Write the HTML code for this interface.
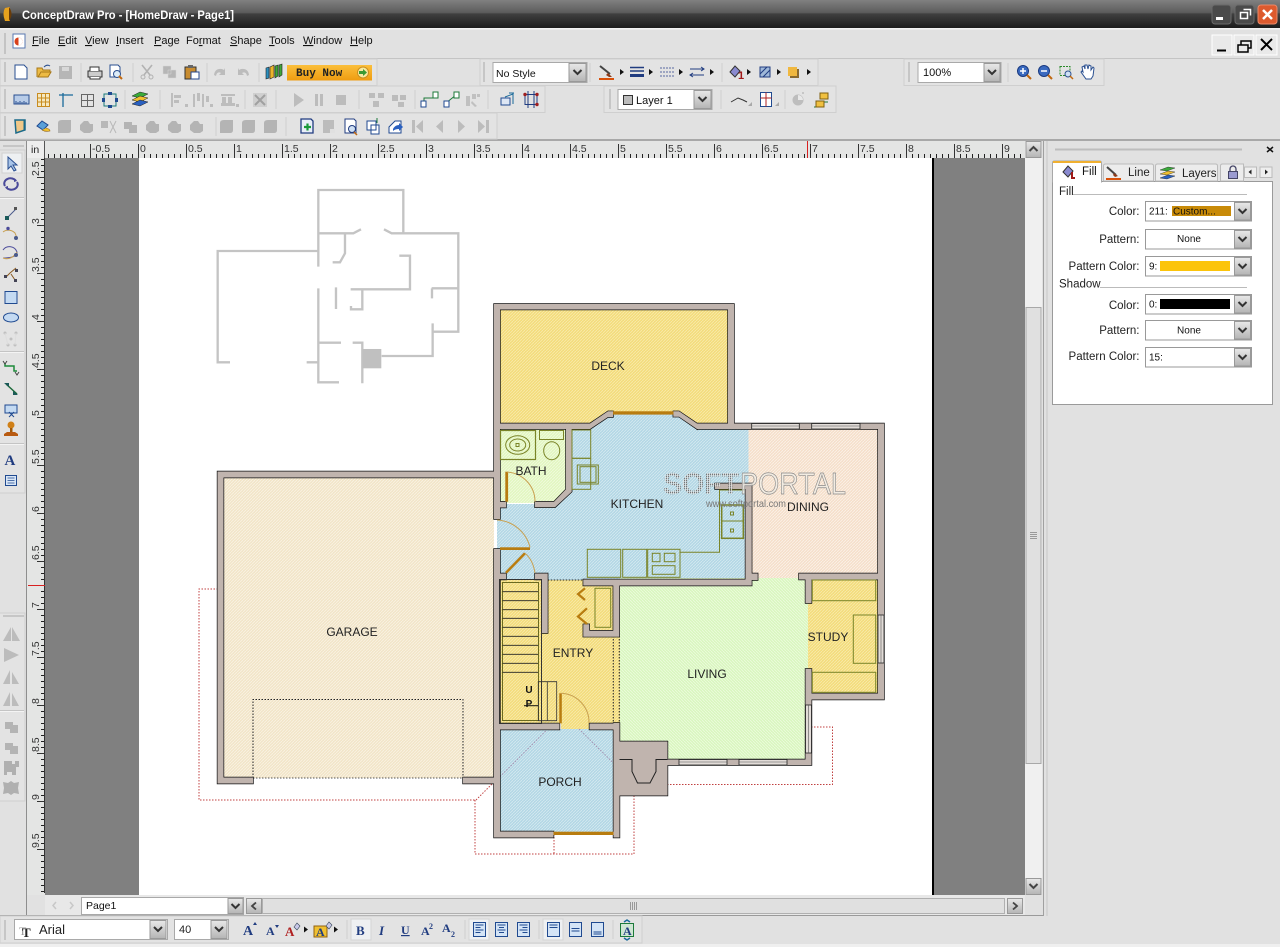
<!DOCTYPE html>
<html lang="en"><head><meta charset="utf-8"><title>ConceptDraw Pro - [HomeDraw - Page1]</title>
<style>
html,body{margin:0;padding:0;background:#e1e1e1;overflow:hidden}
svg{display:block;font-family:"Liberation Sans",Arial,sans-serif}
.m{font-size:11px;fill:#111}
.t{font-size:10.5px;fill:#222}
.r{font-size:11.5px;fill:#222;text-anchor:end}
.c{font-size:10px;fill:#111}
.room{font-size:12px;fill:#222;text-anchor:middle}
.rl{font-size:10.5px;fill:#333}
</style></head><body>
<svg width="1280" height="947" viewBox="0 0 1280 947" xmlns="http://www.w3.org/2000/svg">
<defs>
<linearGradient id="tb" x1="0" y1="0" x2="0" y2="1"><stop offset="0" stop-color="#808080"/><stop offset=".45" stop-color="#5c5c5c"/><stop offset=".5" stop-color="#3f3f3f"/><stop offset="1" stop-color="#1c1c1c"/></linearGradient>
<linearGradient id="btn" x1="0" y1="0" x2="0" y2="1"><stop offset="0" stop-color="#e8e8e8"/><stop offset="1" stop-color="#b4b4b4"/></linearGradient>
<linearGradient id="buy" x1="0" y1="0" x2="0" y2="1"><stop offset="0" stop-color="#fbbf3c"/><stop offset="1" stop-color="#ef9c10"/></linearGradient>
<pattern id="pDeck" width="3" height="3" patternUnits="userSpaceOnUse"><rect width="3" height="3" fill="#f3dc7c"/><path d="M0 3L3 0" stroke="#f8eaa8" stroke-width=".9"/></pattern>
<pattern id="pBlue" width="3" height="3" patternUnits="userSpaceOnUse"><rect width="3" height="3" fill="#b3d7e5"/><path d="M0 3L3 0" stroke="#d3e8ef" stroke-width=".9"/></pattern>
<pattern id="pDin" width="3" height="3" patternUnits="userSpaceOnUse"><rect width="3" height="3" fill="#f5dfca"/><path d="M0 3L3 0" stroke="#fbf1e6" stroke-width=".9"/></pattern>
<pattern id="pBath" width="3" height="3" patternUnits="userSpaceOnUse"><rect width="3" height="3" fill="#e2f6c0"/><path d="M0 3L3 0" stroke="#f0fbdc" stroke-width=".9"/></pattern>
<pattern id="pLiv" width="3" height="3" patternUnits="userSpaceOnUse"><rect width="3" height="3" fill="#d9f6bf"/><path d="M0 0L3 3" stroke="#ecfbdc" stroke-width=".9"/></pattern>
<pattern id="pGar" width="3" height="3" patternUnits="userSpaceOnUse"><rect width="3" height="3" fill="#f2e5c8"/><path d="M0 3L3 0" stroke="#f9f2e2" stroke-width=".9"/></pattern>
<pattern id="tx" width="6" height="4" patternUnits="userSpaceOnUse" x="138" y="154"><rect x="0" y="0" width="1" height="4" fill="#222"/></pattern>
<pattern id="ty" width="4" height="6" patternUnits="userSpaceOnUse" x="41" y="177"><rect x="0" y="0" width="4" height="1" fill="#222"/></pattern>
<pattern id="Tx" width="48" height="14" patternUnits="userSpaceOnUse" x="138" y="144"><rect x="0" y="0" width="1" height="14" fill="#333"/></pattern>
<pattern id="Ty" width="10" height="48" patternUnits="userSpaceOnUse" x="37" y="177"><rect x="0" y="0" width="10" height="1" fill="#333"/></pattern>
<pattern id="dots" width="2" height="2" patternUnits="userSpaceOnUse"><rect width="1.3" height="1.3" fill="#777"/><rect x="1.3" width=".7" height="2" fill="#eee"/></pattern>

<path id="W" d="M494 304H500V519H494ZM494 304H734V309.5H494ZM728 304H734V429H728ZM697 423.5H884V429H697ZM500 423.5H590L608 411.3H613V417H608L590 429H500ZM673.3 411.3H679L697 423.5V429L679 416.7H673.3ZM878 423.5H884V699.5H878ZM805.5 693.5H884V699.5H805.5ZM799 573.5H878V579.5H799ZM805.5 573.5H811.5V603H805.5ZM805.5 669H811.5V765H805.5ZM667 759.5H811.5V765H667ZM619.5 741.5H667.5V795.5H619.5ZM613.5 723H619.5V837.5H613.5ZM494 831.5H553.5V837.5H494ZM494 723.5H559.5V729.5H494ZM589.5 723.5H619.5V729.5H589.5ZM494 549H500V837.5H494ZM500 573.5H506V579.5H500ZM500 501.7H506V507.5H500ZM535 573.5H547.7V579.5H535ZM541.7 573.5H547.7V633H541.7ZM583.3 579.5H751.7V585.5H583.3ZM751 573.5H757.7V580H751ZM745.5 483.5H751.7V585.5H745.5ZM715 483.5H751.7V489H715ZM613.3 585H619.3V636.7H613.3ZM583.3 630.7H619.3V636.7H583.3ZM583.3 624.3H589.3V636.7H583.3ZM566 429H571.7V491.7L555 507.3H535V501.7H554L566 489.3ZM217.5 471.5H494V477.5H217.5ZM217.5 471.5H223.5V783.5H217.5ZM217.5 777.5H253V783.5H217.5ZM463 777.5H494V783.5H463Z"/>

<g id="gdoc"><path d="M-6-7H3L6-4V7H-6Z" fill="#fff" stroke="#2a4f90"/></g>
<g id="gsq"><path d="M-6-6H6V6H-6Z" fill="#b8b8b8"/></g>
<g id="gb1"><path d="M-7-4Q-7-7-3-7H6V3Q6 6 3 6H-7Z" fill="#b4b4b4"/></g>
<g id="gb2"><path d="M-7-2L-3-6H1L3-3H6V4L3 6H-3L-7 3Z" fill="#b4b4b4"/></g>
<g id="gb3"><path d="M-7-5H1V-2H6V6H-2V2H-7Z" fill="#b4b4b4"/></g>
<g id="gtr"><path d="M0-7L7 7H-7Z" fill="#b4b4b4"/><path d="M0-7V7" stroke="#e8e8e8"/></g>
<g id="garr"><path d="M-2-3L2 0L-2 3Z" fill="#111"/></g>
<g id="gchev"><path d="M-4-2L0 2L4-2" fill="none" stroke="#333" stroke-width="2"/></g>
</defs>

<!-- base -->
<rect width="1280" height="947" fill="#e1e1e1"/>

<!-- title bar -->
<rect width="1280" height="28" fill="url(#tb)"/>
<rect y="28" width="1280" height="1.5" fill="#f2f2f2"/>
<path d="M5 8Q2 13 5 21L10 21V7Z" fill="#e7a21e"/><path d="M9 7Q14 14 9 21Z" fill="#6a3c08"/>
<text x="22" y="19" font-size="11.5" font-weight="bold" fill="#fff" textLength="212" lengthAdjust="spacingAndGlyphs">ConceptDraw Pro - [HomeDraw - Page1]</text>
<rect x="1212" y="5" width="19" height="19" rx="3" fill="#4a4a4a" stroke="#6a6a6a"/><rect x="1216" y="17" width="7" height="3" fill="#fff"/>
<rect x="1235" y="5" width="19" height="19" rx="3" fill="#4a4a4a" stroke="#6a6a6a"/><path d="M1240.500 12.500h7v6h-7zM1243.500 9.500h7v6" fill="none" stroke="#fff" stroke-width="1.500"/>
<rect x="1258" y="5" width="19" height="19" rx="3" fill="#dd5a2e" stroke="#e98a6a"/><path d="M1263 10l9 9M1272 10l-9 9" stroke="#fff" stroke-width="2.500"/>

<!-- menu bar -->
<path d="M5 33V54" stroke="#c4c4c4" stroke-width="2"/>
<rect x="13" y="34" width="12" height="14" fill="#fff" stroke="#5a78b0"/><circle cx="18.500" cy="41.500" r="4" fill="#d8401a"/><path d="M18.500 37.500a4 4 0 0 1 0 8Z" fill="#fff"/>
<text class="m" x="32" y="44"><tspan text-decoration="underline">F</tspan>ile</text>
<text class="m" x="58" y="44"><tspan text-decoration="underline">E</tspan>dit</text>
<text class="m" x="85" y="44"><tspan text-decoration="underline">V</tspan>iew</text>
<text class="m" x="116" y="44"><tspan text-decoration="underline">I</tspan>nsert</text>
<text class="m" x="154" y="44"><tspan text-decoration="underline">P</tspan>age</text>
<text class="m" x="186" y="44">Fo<tspan text-decoration="underline">r</tspan>mat</text>
<text class="m" x="230" y="44"><tspan text-decoration="underline">S</tspan>hape</text>
<text class="m" x="269" y="44"><tspan text-decoration="underline">T</tspan>ools</text>
<text class="m" x="303" y="44"><tspan text-decoration="underline">W</tspan>indow</text>
<text class="m" x="350" y="44"><tspan text-decoration="underline">H</tspan>elp</text>
<g fill="#e9e9e9" stroke="#fff"><rect x="1212" y="35" width="20" height="20"/><rect x="1234" y="35" width="20" height="20"/><rect x="1256" y="35" width="21" height="20"/></g>
<path d="M1217 50.500h9" stroke="#000" stroke-width="2"/><path d="M1238 45h10v7h-10zM1241 45v-4h10v7h-3" fill="none" stroke="#000" stroke-width="1.500"/><path d="M1261 39l11 11M1272 39l-11 11" stroke="#000" stroke-width="2"/>

<!-- toolbar lines & bands -->
<rect y="58" width="1280" height="1" fill="#c4c4c4"/>
<rect y="139" width="1280" height="2" fill="#a8a8a8"/>
<g fill="#e3e3e3" stroke="#cfcfcf">
<rect x="0" y="59" width="377" height="26.500"/><rect x="480" y="59" width="338" height="26.500"/><rect x="904" y="59" width="200" height="26.500"/>
<rect x="0" y="86" width="545" height="26.500"/><rect x="604" y="86" width="232" height="26.500"/>
<rect x="0" y="113" width="497" height="26"/>
</g>
<g stroke="#c6c6c6" stroke-width="2"><path d="M5 62V82M5 89V109M5 116V136M484 62V82M610 89V109M909 62V82"/></g>
<g stroke="#cfcfcf"><path d="M81 63V82M133 63V82M207 63V82M259 63V82M590 63V82M722 63V82M1008 63V82M125 90V109M160 90V109M245 90V109M276 90V109M359 90V109M415 90V109M488 90V109M721 90V109M785 90V109M216 117V136M286 117V136"/></g>

<!-- row 1 icons -->
<use href="#gdoc" x="21" y="72"/>
<path d="M37 77V68h5l1 2h7v2h-9l-3 5H48l3-5h-9" fill="#edbb45" stroke="#a87818"/><path d="M44 67q3-3 6-1" fill="none" stroke="#2a4f90"/>
<rect x="59" y="66" width="13" height="13" fill="#b6b6b6"/><rect x="62" y="67" width="7" height="4" fill="#d8d8d8"/>
<rect x="88" y="71" width="14" height="6" fill="#ccc" stroke="#333"/><path d="M90 71v-4h9v4M90 77v2h10v-2" fill="#fff" stroke="#333"/>
<path d="M110 65h8l2 2v10h-10Z" fill="#fff" stroke="#2a4f90"/><circle cx="117" cy="74" r="3.500" fill="#dcecf8" stroke="#2a4f90"/><path d="M119 76l3 3" stroke="#c06810" stroke-width="2"/>
<path d="M142 65l8 10M152 65l-8 10" stroke="#b2b2b2" stroke-width="1.600"/><circle cx="143" cy="77" r="2" fill="none" stroke="#b2b2b2"/><circle cx="151" cy="77" r="2" fill="none" stroke="#b2b2b2"/>
<path d="M163 66h8v8h-8ZM168 70h8v8h-8Z" fill="#b6b6b6" stroke="#d8d8d8" stroke-width=".5"/>
<rect x="185" y="67" width="11" height="12" fill="#c88c30" stroke="#333"/><rect x="188" y="65" width="5" height="3" fill="#666"/><rect x="191" y="72" width="8" height="7" fill="#fff" stroke="#23458c"/>
<path d="M214 75q1-7 8-6l2 1 1-2v7h-6l2-2q-4-2-5 3Z" fill="#bcbcbc"/><path d="M249 75q-1-7-8-6l-2 1-1-2v7h6l-2-2q4-2 5 3Z" fill="#bcbcbc"/>
<g stroke="#222" stroke-width=".6"><path d="M266 68l3-1v11l-3 1Z" fill="#2a90c0"/><path d="M270 67l4-2v12l-4 2Z" fill="#ecb42a"/><path d="M275 66l3-1v11l-3 2Z" fill="#3fa53a"/><path d="M279 65l3-1v11l-3 2Z" fill="#3fa53a"/></g>
<rect x="287" y="65" width="85" height="15.500" fill="url(#buy)"/>
<text x="296" y="76" font-family="'Liberation Mono',monospace" font-weight="bold" font-size="11" fill="#222">Buy Now</text>
<circle cx="363" cy="72.500" r="5.500" fill="#f8e9a0" stroke="#c89020"/><path d="M359 71h4v-2l4 3.500-4 3.500v-2h-4Z" fill="#3a9a32"/>

<!-- row 1 mid -->
<rect x="493" y="62.500" width="94" height="20" fill="#fff" stroke="#a9a9a9"/>
<rect x="569" y="63.500" width="17" height="18" fill="url(#btn)" stroke="#999"/><use href="#gchev" x="577.500" y="72"/>
<text x="496" y="77" font-size="10.500" fill="#111">No Style</text>
<path d="M600 66l10 8" stroke="#444" stroke-width="2"/><path d="M608 73l4 4-3 0-3-2Z" fill="#8a3a1a"/><rect x="599" y="78" width="15" height="2" fill="#d8500a"/>
<use href="#garr" x="622" y="72"/>
<path d="M630 67.500h14M630 71h14" stroke="#203c80" stroke-width="1.500"/><rect x="630" y="74" width="14" height="3" fill="#203c80"/>
<use href="#garr" x="651" y="72"/>
<path d="M660 68h14M660 72h14M660 76h14" stroke="#5a6aa0" stroke-dasharray="2 1"/>
<use href="#garr" x="681" y="72"/>
<path d="M690 69h14M690 75h14" stroke="#203c80"/><path d="M701 67l3 2-3 2M693 73l-3 2 3 2" fill="none" stroke="#203c80"/>
<use href="#garr" x="712" y="72"/>
<path d="M730 72l5-6 5 5-5 6Z" fill="#8a8ad0" stroke="#333"/><text x="738" y="79" font-size="11" font-weight="bold" fill="#a01818">1</text>
<use href="#garr" x="749" y="72"/>
<rect x="760" y="67" width="10" height="10" fill="#9fb8d8" stroke="#203c80"/><path d="M760 74l7-7M763 77l7-7" stroke="#203c80"/>
<use href="#garr" x="779" y="72"/>
<rect x="790" y="69" width="9" height="9" fill="#8a6a30"/><rect x="788" y="67" width="9" height="9" fill="#f0b840"/>
<use href="#garr" x="809" y="72"/>

<!-- zoom -->
<rect x="918" y="62.500" width="83" height="20" fill="#fff" stroke="#a9a9a9"/>
<rect x="984" y="63.500" width="16" height="18" fill="url(#btn)" stroke="#999"/><use href="#gchev" x="992" y="72"/>
<text x="923" y="76" font-size="11" fill="#111">100%</text>
<circle cx="1023" cy="71" r="5.500" fill="#3a6ac0" stroke="#1a3a80"/><path d="M1020 71h6M1023 68v6" stroke="#fff" stroke-width="1.500"/><path d="M1027 75l4 4" stroke="#c06810" stroke-width="2"/>
<circle cx="1044" cy="71" r="5.500" fill="#3a6ac0" stroke="#1a3a80"/><path d="M1041 71h6" stroke="#fff" stroke-width="1.500"/><path d="M1048 75l4 4" stroke="#c06810" stroke-width="2"/>
<rect x="1060" y="66.500" width="10" height="9" fill="none" stroke="#2a8a2a" stroke-dasharray="2 1"/><circle cx="1068" cy="74" r="3" fill="#cfe0f4" stroke="#2a4f90"/><path d="M1070 76l3 3" stroke="#c06810" stroke-width="1.500"/>
<path d="M1083 72l-1-5 2-1 1 3 0-4 2 0 1 4 1-4 2 1 0 4 2-3 1 1-1 8-2 3h-5l-5-7 1-1Z" fill="#fff" stroke="#2a4f90"/>

<!-- row 2 icons -->
<rect x="14" y="95" width="15" height="9" fill="#b8cce8" stroke="#2a4f90"/><path d="M16 104v-3M18 104v-2M20 104v-3M22 104v-2M24 104v-3M26 104v-2" stroke="#2a4f90"/>
<path d="M37.500 93.500h12v13h-12ZM37.500 98h12M37.500 102h12M41.500 93.500v13M45.500 93.500v13" fill="#f5e8c0" stroke="#c88c20"/>
<path d="M59 95h14M63 93v14" stroke="#1a6a9a" stroke-width="1.300"/>
<path d="M81.500 94.500h12v12h-12ZM87.500 94.500v12M81.500 100.500h12" fill="none" stroke="#666"/>
<rect x="104" y="94" width="12" height="12" fill="none" stroke="#1a7a7a"/><g fill="#204a90"><rect x="108" y="92" width="4" height="3"/><rect x="108" y="105" width="4" height="3"/><rect x="102" y="98" width="3" height="4"/><rect x="115" y="98" width="3" height="4"/></g>
<path d="M132 96l8-4 8 2-8 4Z" fill="#3aaa3a" stroke="#222" stroke-width=".5"/><path d="M132 100l8-4 8 2-8 4Z" fill="#f0c030" stroke="#222" stroke-width=".5"/><path d="M132 104l8-4 8 2-8 4Z" fill="#2a60c0" stroke="#222" stroke-width=".5"/>
<g fill="#bdbdbd"><path d="M171 93h2v14h-2ZM174 95h7v3h-7ZM174 100h5v3h-5ZM185 104l3 0v3h-3Z"/><path d="M193 94h2v13h-2ZM197 93h3v8h-3ZM202 94h2v13h-2ZM206 96h3v6h-3ZM210 104h3v3h-3Z"/><path d="M221 94h14v2h-14ZM222 97h4v6h-4ZM228 97h4v6h-4ZM221 103h14v3h-14ZM236 104h3v3h-3Z"/><path d="M253 93h14v14h-14Z" fill="#cfcfcf"/></g>
<path d="M255 95l10 10M265 95l-10 10" stroke="#a0a0a0" stroke-width="2"/>
<path d="M294 93l10 7-10 7Z" fill="#bcbcbc"/><path d="M315 94h3v12h-3ZM320 94h3v12h-3Z" fill="#bcbcbc"/><rect x="336" y="95" width="10" height="10" fill="#bcbcbc"/>
<g fill="#bcbcbc"><path d="M369 93h6v5h-6ZM378 93h6v5h-6ZM373 101h6v6h-6Z"/><path d="M392 95h6v6h-6ZM400 95h6v5h-6ZM398 102h6v5h-6Z"/></g>
<path d="M424 104v-6h9v-4h4" fill="none" stroke="#1c7a3a"/><rect x="421" y="101" width="5" height="6" fill="#fff" stroke="#204a90"/><rect x="433" y="92" width="5" height="6" fill="#fff" stroke="#1c7a3a"/>
<path d="M446 103l10-8" stroke="#1c7a3a"/><rect x="444" y="101" width="5" height="6" fill="#fff" stroke="#204a90"/><rect x="454" y="92" width="5" height="6" fill="#fff" stroke="#1c7a3a"/>
<g fill="#c0c0c0"><path d="M466 96h4v10h-4ZM472 94h4v5h-4ZM477 94h3v3h-3ZM472 101l5 5-2 1-4-4Z"/></g>
<rect x="501" y="98" width="9" height="7" fill="#dde6f4" stroke="#204a90"/><path d="M505 97l8-3v10M509 93h5" fill="none" stroke="#1a6a9a"/>
<path d="M525 94.500h12v10h-12ZM528 91v17M534 91v17" fill="none" stroke="#203c80"/><g fill="#a02020"><circle cx="525" cy="94.500" r="1.700"/><circle cx="537" cy="94.500" r="1.700"/><circle cx="537" cy="104.500" r="1.700"/></g>
<rect x="618" y="89.500" width="94" height="20" fill="#fff" stroke="#a9a9a9"/>
<rect x="694" y="90.500" width="17" height="18" fill="url(#btn)" stroke="#999"/><use href="#gchev" x="702.500" y="99"/>
<rect x="623.500" y="95.500" width="9" height="9" fill="#bcbcbc" stroke="#333"/>
<text x="636" y="104" font-size="11" fill="#111">Layer 1</text>
<path d="M731 102l7-4 5 2 4 2" fill="none" stroke="#333"/><path d="M748 106h4v-4Z" fill="#aaa"/>
<rect x="760.500" y="92.500" width="11" height="14" fill="#fff" stroke="#204a90"/><path d="M760.500 98h11M766 92.500v14" stroke="#b02020"/><path d="M775 106h4v-4Z" fill="#aaa"/>
<circle cx="798" cy="100" r="5.500" fill="#bdbdbd"/><path d="M798 95a5 5 0 0 1 5 5h-5Z" fill="#e8e8e8"/><path d="M803 94v-2" stroke="#aaa"/>
<path d="M814 107h7v-5h7" fill="none" stroke="#1c7a3a"/><rect x="820" y="93" width="8" height="6" fill="#f0c040" stroke="#806010"/><rect x="816" y="101" width="8" height="6" fill="#f0c040" stroke="#806010"/>

<!-- row 3 icons -->
<path d="M15 120h10v10l-9 3Z" fill="#f0c888" stroke="#1a6a8a" stroke-width="1.500"/><path d="M24 120v11" stroke="#1a6a8a"/>
<path d="M37 126l5-5 6 4-5 5Z" fill="#5aa0d8" stroke="#204a90"/><path d="M46 128q4 1 4 3-5 1-8-1" fill="#f0c030" stroke="#906010" stroke-width=".6"/>
<use href="#gb1" x="65" y="127"/><use href="#gb2" x="87" y="127"/>
<path d="M101 121h7v7h-7Z" fill="#b8b8b8"/><path d="M110 121l6 12M116 121l-6 12" stroke="#b8b8b8"/>
<use href="#gb3" x="131" y="127"/><use href="#gb2" x="153" y="127"/><use href="#gb2" x="175" y="127"/><use href="#gb2" x="197" y="127"/>
<use href="#gb1" x="227" y="127"/><use href="#gb1" x="249" y="127"/><use href="#gb1" x="271" y="127"/>
<path d="M301 119h10l2 2v12h-12Z" fill="#e8eef8" stroke="#203c80" stroke-width="1.300"/><path d="M304 127h7M307.500 123.500v7" stroke="#1a9a3a" stroke-width="2.200"/>
<rect x="323" y="120" width="11" height="13" fill="#bcbcbc"/><rect x="330" y="129" width="5" height="4" fill="#e0e0e0"/>
<path d="M345 119h9l2 2v12h-11Z" fill="#fff" stroke="#203c80"/><circle cx="352" cy="129" r="3.500" fill="#cfe0f4" stroke="#203c80"/><path d="M354 132l3 3" stroke="#c06810" stroke-width="1.500"/>
<path d="M367 121h9v9h-9ZM371 125h8v9h-8Z" fill="#fff" stroke="#204a90"/><path d="M377 118v5" stroke="#1c7a3a"/>
<path d="M389 127l6-6h6v12h-12Z" fill="#fff" stroke="#204a90"/><path d="M393 129q2-4 6-4v-2l4 4-4 4v-2q-4 0-6 2Z" fill="#2a60c0"/>
<path d="M412 120h3v13h-3ZM423 120v13l-7-6.500Z" fill="#bcbcbc"/><path d="M443 120v13l-7-6.500Z" fill="#bcbcbc"/><path d="M458 120v13l7-6.500Z" fill="#bcbcbc"/><path d="M478 120v13l7-6.500ZM486 120h3v13h-3Z" fill="#bcbcbc"/>

<!-- left toolbar -->
<rect x="0" y="141" width="26" height="806" fill="#e1e1e1"/>
<rect x="26" y="141" width="1" height="775" fill="#8e8e8e"/>
<g fill="#e3e3e3" stroke="#cfcfcf"><rect x="-1" y="150" width="26" height="343"/><rect x="-1" y="613" width="26" height="188"/></g>
<path d="M3 146H24M3 616H24" stroke="#c6c6c6" stroke-width="2"/>
<path d="M0 198.500H24M0 352.500H24M0 444.500H24M0 711.500H24" stroke="#f4f4f4"/><path d="M0 197.500H24M0 351.500H24M0 443.500H24M0 710.500H24" stroke="#c4c4c4"/>
<rect x="2" y="153" width="20" height="20" fill="#eef0f2" stroke="#d0d0d0"/>
<path d="M8 157v12l3-3 3 5 2-1-3-5h4Z" fill="#a8c4e8" stroke="#2a4f90"/>
<path d="M5 186a6 5 0 0 1 11-5M17 182a6 5 0 0 1-11 5" fill="none" stroke="#4a4a9a" stroke-width="2"/><path d="M14 178l3 3-3 1ZM8 190l-3-3 3-1Z" fill="#4a4a9a"/>
<path d="M7 218l9-9" stroke="#4a5a8a"/><rect x="5" y="216" width="4" height="4" fill="#1a5a5a"/><rect x="14" y="207" width="3" height="3" fill="#555"/>
<path d="M3 232a9 9 0 0 1 12 1l2 5" fill="none" stroke="#c8a050"/><circle cx="8" cy="228.500" r="1.700" fill="#4a4a9a"/><circle cx="16" cy="238" r="2" fill="#4a5a8a"/>
<path d="M3 250a8 8 0 0 1 14 2q0 6-14 6" fill="none" stroke="#4a4a9a"/><path d="M3 258q8 3 14-6" fill="none" stroke="#c8a050"/><circle cx="16" cy="255" r="2" fill="#4a5a8a"/>
<path d="M6 277l4-4 6-5M11 274l4 6" fill="none" stroke="#8a5a20"/><g fill="#445"><rect x="4" y="275" width="3" height="3"/><rect x="15" y="269" width="3" height="3"/><rect x="14" y="279" width="3" height="3"/></g>
<rect x="5" y="291.500" width="12" height="12" fill="#c4daf2" stroke="#204a90"/>
<ellipse cx="11" cy="317.500" rx="7.500" ry="4.500" fill="#c4daf2" stroke="#204a90"/>
<g fill="#c0c0c0"><circle cx="5" cy="333" r="1.500"/><circle cx="16" cy="333" r="1.500"/><circle cx="11" cy="339" r="1.500"/><circle cx="8" cy="345" r="1.500"/><circle cx="15" cy="345" r="1.500"/></g><path d="M5 333l3 12M16 333l-1 12" stroke="#ddd"/>
<path d="M5 363v3h9v5h3" fill="none" stroke="#1c8a3a" stroke-width="1.500"/><path d="M3 361l2 3 2-3M15 372l2 3 2-3" fill="none" stroke="#444"/>
<path d="M6 384l11 10" stroke="#1c6a3a" stroke-width="1.500"/><path d="M4 383h5v4ZM18 395h-5v-4Z" fill="#1c5a5a"/>
<rect x="5" y="405" width="12" height="8" fill="#c4daf2" stroke="#204a90"/><path d="M9 412l5 5M14 412l-5 5" stroke="#204a90"/>
<circle cx="11" cy="425" r="3.500" fill="#d08018"/><rect x="10" y="428" width="2.500" height="4" fill="#a05808"/><path d="M4 434l3-2h8l3 2v2H4Z" fill="#b85a10"/>
<text x="4.500" y="465" font-family="'Liberation Serif',serif" font-weight="bold" font-size="15" fill="#203c80">A</text>
<rect x="5.500" y="475.500" width="11" height="10" fill="#d8e6f6" stroke="#204a90"/><path d="M7.500 478h7M7.500 480.500h7M7.500 483h7" stroke="#204a90" stroke-width=".8"/>
<path d="M11 627v14H3ZM12 627v14h8Z" fill="#bcbcbc"/><path d="M4 648l15 7-15 7Z" fill="#bcbcbc"/>
<path d="M10 670v14H3ZM12 672l7 12h-7Z" fill="#bcbcbc"/><path d="M10 692v14H3ZM12 693l7 13h-7Z" fill="#bcbcbc"/>
<use href="#gb3" x="12" y="727"/><use href="#gb3" x="12" y="748"/>
<path d="M4 761h8v3h3v-3h4v6h-3v8h-4v-3H7v3H4Z" fill="#b0b0b0"/><path d="M3 782l5 1 3-2 3 2 5-1-1 6 1 6-5-1-3 2-3-2-5 1 1-6Z" fill="#b0b0b0"/>

<!-- rulers -->
<rect x="27" y="141" width="18" height="17" fill="#eee"/>
<text x="31" y="153" font-size="10.500" fill="#222">in</text>
<rect x="45" y="141" width="980" height="17" fill="#e4e5e4"/>
<rect x="27" y="158" width="18" height="737" fill="#e4e5e4"/>
<path d="M44.500 141V158" stroke="#555"/>
<rect x="45" y="154" width="979" height="4" fill="url(#tx)"/>
<rect x="45" y="144" width="979" height="14" fill="url(#Tx)"/>
<rect x="41" y="158" width="4" height="735" fill="url(#ty)"/>
<rect x="37" y="158" width="8" height="735" fill="url(#Ty)"/>
<rect x="44" y="158" width="1" height="735" fill="#333"/>
<g class="rl">
<text class="rl" x="92" y="152">-0.5</text><text class="rl" x="140" y="152">0</text><text class="rl" x="188" y="152">0.5</text><text class="rl" x="236" y="152">1</text><text class="rl" x="284" y="152">1.5</text><text class="rl" x="332" y="152">2</text><text class="rl" x="380" y="152">2.5</text><text class="rl" x="428" y="152">3</text><text class="rl" x="476" y="152">3.5</text><text class="rl" x="524" y="152">4</text><text class="rl" x="572" y="152">4.5</text><text class="rl" x="620" y="152">5</text><text class="rl" x="668" y="152">5.5</text><text class="rl" x="716" y="152">6</text><text class="rl" x="764" y="152">6.5</text><text class="rl" x="812" y="152">7</text><text class="rl" x="860" y="152">7.5</text><text class="rl" x="908" y="152">8</text><text class="rl" x="956" y="152">8.5</text><text class="rl" x="1004" y="152">9</text>
</g>
<g>
<text class="rl" transform="translate(39,176) rotate(-90)">2.5</text><text class="rl" transform="translate(39,224) rotate(-90)">3</text><text class="rl" transform="translate(39,272) rotate(-90)">3.5</text><text class="rl" transform="translate(39,320) rotate(-90)">4</text><text class="rl" transform="translate(39,368) rotate(-90)">4.5</text><text class="rl" transform="translate(39,416) rotate(-90)">5</text><text class="rl" transform="translate(39,464) rotate(-90)">5.5</text><text class="rl" transform="translate(39,512) rotate(-90)">6</text><text class="rl" transform="translate(39,560) rotate(-90)">6.5</text><text class="rl" transform="translate(39,608) rotate(-90)">7</text><text class="rl" transform="translate(39,656) rotate(-90)">7.5</text><text class="rl" transform="translate(39,704) rotate(-90)">8</text><text class="rl" transform="translate(39,752) rotate(-90)">8.5</text><text class="rl" transform="translate(39,800) rotate(-90)">9</text><text class="rl" transform="translate(39,848) rotate(-90)">9.5</text>
</g>
<rect x="807" y="141" width="1" height="17" fill="#d82020"/>
<rect x="28" y="585" width="17" height="1" fill="#d82020"/>

<!-- canvas -->
<rect x="45" y="158" width="980" height="737" fill="#808080"/>
<rect x="139" y="158" width="793" height="737" fill="#fff"/>
<rect x="932" y="158" width="2" height="737" fill="#000"/>

<!-- ghost plan -->
<g transform="translate(190,170) scale(.3333)" fill="none" stroke="#c4c4c4" stroke-width="7">
<path d="M385 190V60H640V190M385 190H490L513 178M582 178L605 190H805V485H730M385 243H83V577H120M385 190V290M465 190V250L450 277H428M385 355V637H447M438 352V417M628 257H660V358H482M517 360V418H483V408M725 355H805M726 355V385M728 460V558H575M350 577H385M385 518H453M488 518H517V640"/>
<rect x="517" y="537" width="57" height="58" fill="#c0c0c0" stroke="none"/>
</g>

<!-- plan: red dotted -->
<g fill="none" stroke="#c04040" stroke-width="1" stroke-dasharray="1.500 1.500">
<path d="M488 589H199V800H476L493 783M475 800V854H634V795M554 729V854M619 727H832.500V784.500H668"/>
</g>

<!-- rooms -->
<path d="M223 477H494V778H223Z" fill="url(#pGar)"/>
<path d="M499 309H728V424H697L680 412H608L590 424H499Z" fill="url(#pDeck)"/>
<path d="M497 504H535L571 490V429H590L608 413H680L697 429H748.500V580H497Z" fill="url(#pBlue)"/>
<path d="M748.500 429H878V574H805V578H748.500Z" fill="url(#pDin)"/>
<path d="M500 429H566V490L554 503H500Z" fill="url(#pBath)"/>
<path d="M500 580H620V729H561V723H500Z" fill="url(#pDeck)"/>
<path d="M620 578H808V700H805V760H667V742H620Z" fill="url(#pLiv)"/>
<path d="M808 580H878V693H808Z" fill="url(#pDeck)"/>
<path d="M499 729H614V832H499Z" fill="url(#pBlue)"/>

<!-- garage door dashed -->
<path d="M253 778V699.500H463V778" fill="none" stroke="#222" stroke-dasharray="1.500 1.500"/>
<path d="M253 778H463" stroke="#555" stroke-dasharray="1.500 1.500"/>
<path d="M500 776.700L546.700 730M579 729L613 762.700" stroke="#a090b0" stroke-dasharray="1.500 1.500"/>
<path d="M547.700 580H583M613.300 636V723M619.300 636V723" stroke="#222" stroke-dasharray="1.500 1.500"/>

<!-- walls -->
<use href="#W" fill="#111" stroke="#111" stroke-width="1.400"/>
<use href="#W" fill="#c0b4ae"/>

<!-- windows -->
<g fill="#e2dcd8" stroke="#222" stroke-width=".8">
<rect x="751.700" y="423.500" width="47.600" height="5.500"/><rect x="811.700" y="423.500" width="48.300" height="5.500"/>
<rect x="679" y="759.500" width="48" height="5.500"/><rect x="739" y="759.500" width="48" height="5.500"/>
<rect x="878" y="615" width="6" height="48"/><rect x="805.500" y="705" width="6" height="48"/>
</g>
<path d="M751.700 426H799M811.700 426H860M679 762H727M739 762H787M881 615V663M808.500 705V753" stroke="#555" stroke-width=".6"/>

<!-- fireplace -->
<path d="M619.500 759.500H632V771.500L637.500 783H650L656 771.500V759.500H667.500" fill="none" stroke="#222"/>

<!-- orange doors/windows -->
<g fill="#b87c10">
<rect x="613" y="411.300" width="60.500" height="3.300"/>
<rect x="505.300" y="471.700" width="2.800" height="30"/>
<rect x="500" y="547.300" width="30" height="2.700"/>
<rect x="559.300" y="693.300" width="2.500" height="30"/>
<rect x="553.500" y="831.700" width="60" height="3.300"/>
</g>
<path d="M506 572.700L525 553.300" stroke="#b87c10" stroke-width="2.500"/>
<g fill="none" stroke="#c8a050">
<path d="M507 472A29.700 29.700 0 0 1 535 501.700"/>
<path d="M497 520A36 36 0 0 1 530 547.300"/>
<path d="M525 553.300Q533 560 535 573"/>
<path d="M561 693.300A29 29 0 0 1 589 723"/>
</g>
<path d="M585 588.300L578 594L585 600M587 608.300L578 616.600L587 624" fill="none" stroke="#b87c10" stroke-width="2.200"/>

<!-- fixtures olive -->
<g fill="none" stroke="#7a8428" stroke-width="1">
<rect x="500.500" y="430.500" width="35" height="29" stroke-width="1.200"/>
<ellipse cx="517.700" cy="445" rx="12" ry="9.300"/><ellipse cx="517.700" cy="445" rx="8" ry="6"/><rect x="516" y="443.500" width="3" height="3"/>
<rect x="539.500" y="430.500" width="24" height="9"/><ellipse cx="551.700" cy="450.700" rx="8" ry="9"/>
<rect x="572" y="430" width="18.700" height="28.300"/><rect x="572" y="458.300" width="18.700" height="31"/>
<rect x="577.300" y="465" width="21" height="19"/><rect x="580" y="466.700" width="16" height="15.600"/>
<rect x="587.300" y="549.300" width="33.400" height="28"/><rect x="622.700" y="549.300" width="24" height="28"/><rect x="647.700" y="549.300" width="32.300" height="28"/>
<path d="M680 552.300H719.500V490H745"/>
<rect x="721.700" y="505" width="21.600" height="33.300" stroke-width="1.500"/><path d="M721.700 521H743.300"/>
<rect x="730.500" y="512" width="3" height="3"/><rect x="730.500" y="529" width="3" height="3"/>
<rect x="652.300" y="553.300" width="7.700" height="8.400"/><rect x="664.300" y="553.300" width="10.700" height="8.400"/><rect x="652.300" y="565.700" width="22.700" height="8.600"/>
<rect x="595" y="588.300" width="15.700" height="39"/>
<rect x="812.300" y="580" width="63.400" height="20.700"/><rect x="853.300" y="615" width="22.400" height="48.300"/><rect x="812.300" y="672.300" width="63.400" height="20"/>
</g>

<!-- stairs -->
<rect x="499.500" y="579.500" width="42" height="144" fill="none" stroke="#333"/>
<rect x="502.500" y="582.500" width="36" height="138" fill="none" stroke="#6a6a20"/>
<path d="M502.500 591.700H538M502.500 600.700H538M502.500 609.700H538M502.500 618.300H538M502.500 627.300H538M502.500 636.300H538M502.500 645.300H538M502.500 654.300H538M502.500 663.300H538M502.500 672.300H538" stroke="#222" stroke-width=".8"/>
<path d="M538.300 681.700H556.700V720.700H538.300ZM547.300 681.700V720.700" fill="none" stroke="#333" stroke-width=".8"/>
<text x="529" y="693" font-size="10" font-weight="bold" fill="#111" text-anchor="middle">U</text>
<text x="529" y="707" font-size="10" font-weight="bold" fill="#111" text-anchor="middle">P</text>
<path d="M524 705.700H538" stroke="#111"/>

<!-- room labels -->
<text class="room" x="608" y="370">DECK</text>
<text class="room" x="531" y="475">BATH</text>
<text class="room" x="637" y="508">KITCHEN</text>
<text class="room" x="808" y="511">DINING</text>
<text class="room" x="352" y="636">GARAGE</text>
<text class="room" x="573" y="657">ENTRY</text>
<text class="room" x="707" y="678">LIVING</text>
<text class="room" x="828" y="641">STUDY</text>
<text class="room" x="560" y="786">PORCH</text>

<!-- watermark -->
<text x="663" y="494" font-size="31" font-weight="bold" fill="url(#dots)" textLength="76" lengthAdjust="spacingAndGlyphs">SOFT</text>
<text x="740" y="494" font-size="31" fill="#f0ede6" fill-opacity=".75" stroke="#8a8a8a" stroke-width=".7" textLength="106" lengthAdjust="spacingAndGlyphs">PORTAL</text>
<text x="706" y="507" font-size="10.500" fill="#777" textLength="80" lengthAdjust="spacingAndGlyphs">www.softportal.com</text>

<!-- v scrollbar -->
<rect x="1025" y="141" width="17" height="754" fill="#f0f0f0"/>
<rect x="1026" y="141.500" width="15" height="16" fill="url(#btn)" stroke="#999"/><path d="M1029.500 151l4-4 4 4" fill="none" stroke="#444" stroke-width="2"/>
<rect x="1026" y="307.500" width="15" height="456" fill="#e0e0e0" stroke="#a8a8a8"/>
<path d="M1030 532.500h7M1030 534.500h7M1030 536.500h7M1030 538.500h7" stroke="#999"/>
<rect x="1026" y="878.500" width="15" height="16" fill="url(#btn)" stroke="#999"/><path d="M1029.500 884l4 4 4-4" fill="none" stroke="#444" stroke-width="2"/>

<!-- page tab & h scrollbar -->
<rect x="45" y="895" width="980" height="21" fill="#e8e8e8"/>
<path d="M56 902l-3 3.500 3 3.500M70 902l3 3.500-3 3.500" fill="none" stroke="#c8c8c8" stroke-width="1.500"/>
<rect x="81.500" y="897.500" width="162" height="17" fill="#fff" stroke="#a9a9a9"/>
<rect x="228" y="898.500" width="15" height="15" fill="url(#btn)" stroke="#999"/><use href="#gchev" x="235.500" y="906"/>
<text x="86" y="909" font-size="10.500" fill="#111">Page1</text>
<rect x="246.500" y="898.500" width="15" height="15" fill="url(#btn)" stroke="#999"/><path d="M256 902.500l-4 3.500 4 3.500" fill="none" stroke="#444" stroke-width="1.800"/>
<rect x="262.500" y="898.500" width="742" height="15" fill="#e0e0e0" stroke="#b0b0b0"/>
<path d="M630.500 902v8M632.500 902v8M634.500 902v8M636.500 902v8" stroke="#999"/>
<rect x="1007.500" y="898.500" width="15" height="15" fill="url(#btn)" stroke="#999"/><path d="M1013 902.500l4 3.500-4 3.500" fill="none" stroke="#444" stroke-width="1.800"/>
<rect x="0" y="915" width="1044" height="1" fill="#9a9a9a"/>

<!-- right panel -->
<rect x="1043" y="141" width="237" height="806" fill="#e1e1e1"/>
<path d="M1043.500 141V916" stroke="#a0a0a0"/><path d="M1047 141V916" stroke="#c8c8c8"/>
<path d="M1055 149.500H1242" stroke="#bdbdbd" stroke-width="2"/>
<path d="M1267 147l6 5M1273 147l-6 5" stroke="#111" stroke-width="1.500"/>
<rect x="1052.500" y="181.500" width="220" height="223" fill="#fff" stroke="#9a9a9a"/>
<!-- tabs -->
<path d="M1103.500 181V166q0-2 2-2h46q2 0 2 2v15Z" fill="#ececec" stroke="#bbb"/>
<path d="M1155.500 181V166q0-2 2-2h58q2 0 2 2v15Z" fill="#ececec" stroke="#bbb"/>
<path d="M1220.500 181V166q0-2 2-2h21v17Z" fill="#ececec" stroke="#bbb"/>
<path d="M1052.500 182V163q0-2 2-2h45q2 0 2 2v19Z" fill="#fff" stroke="#a8a8a8"/>
<rect x="1053" y="161" width="48" height="2" fill="#f0b030"/>
<rect x="1053" y="180" width="48" height="3" fill="#fff"/>
<path d="M1063 172l5-6 5 5-5 6Z" fill="#8a8ad0" stroke="#333"/><path d="M1072 172v6h3" stroke="#a01818" stroke-width="2" fill="none"/>
<text x="1082" y="175" font-size="11.500" fill="#111">Fill</text>
<path d="M1107 167l9 8" stroke="#444" stroke-width="2"/><path d="M1114 173l4 3-3 1-2-2Z" fill="#8a3a1a"/><rect x="1106" y="178" width="15" height="2" fill="#d8500a"/>
<text x="1128" y="176" font-size="11.500" fill="#222">Line</text>
<path d="M1160 170l8-3 7 1-8 3Z" fill="#3aaa3a" stroke="#222" stroke-width=".4"/><path d="M1160 174l8-3 7 1-8 3Z" fill="#f0c030" stroke="#222" stroke-width=".4"/><path d="M1160 178l8-3 7 1-8 3Z" fill="#2a60c0" stroke="#222" stroke-width=".4"/>
<text x="1182" y="177" font-size="11.500" fill="#222">Layers</text>
<rect x="1228.500" y="171.500" width="9" height="7" fill="#9a9ad0" stroke="#446"/><path d="M1230 171v-2a3 3 0 0 1 6 0v2" fill="none" stroke="#446" stroke-width="1.300"/>
<rect x="1244.500" y="167" width="12" height="10.500" fill="#eee" stroke="#bbb"/><path d="M1251.500 169.500l-3 2.500 3 2.500Z" fill="#222"/>
<rect x="1260" y="167" width="12" height="10.500" fill="#eee" stroke="#bbb"/><path d="M1265 169.500l3 2.500-3 2.500Z" fill="#222"/>
<!-- panel content -->
<text x="1059" y="195" font-size="11.500" fill="#222">Fill</text><path d="M1073 194.500H1247" stroke="#bbb"/>
<text x="1059" y="287.500" font-size="11.500" fill="#222">Shadow</text><path d="M1100 287.500H1247" stroke="#bbb"/>
<text class="r" x="1139.500" y="215">Color:</text>
<text class="r" x="1139.500" y="243">Pattern:</text>
<text class="r" x="1139.500" y="270">Pattern Color:</text>
<text class="r" x="1139.500" y="309">Color:</text>
<text class="r" x="1139.500" y="334">Pattern:</text>
<text class="r" x="1139.500" y="360">Pattern Color:</text>
<g fill="#fff" stroke="#999">
<rect x="1145.500" y="201.500" width="106" height="19.500"/><rect x="1145.500" y="229.500" width="106" height="19.500"/><rect x="1145.500" y="256.500" width="106" height="19.500"/><rect x="1145.500" y="294.500" width="106" height="19.500"/><rect x="1145.500" y="320.500" width="106" height="19.500"/><rect x="1145.500" y="347.500" width="106" height="19.500"/>
</g>
<g fill="url(#btn)" stroke="#999">
<rect x="1234.500" y="202.500" width="16" height="17.500"/><rect x="1234.500" y="230.500" width="16" height="17.500"/><rect x="1234.500" y="257.500" width="16" height="17.500"/><rect x="1234.500" y="295.500" width="16" height="17.500"/><rect x="1234.500" y="321.500" width="16" height="17.500"/><rect x="1234.500" y="348.500" width="16" height="17.500"/>
</g>
<use href="#gchev" x="1242.500" y="211"/><use href="#gchev" x="1242.500" y="239"/><use href="#gchev" x="1242.500" y="266"/><use href="#gchev" x="1242.500" y="304"/><use href="#gchev" x="1242.500" y="330"/><use href="#gchev" x="1242.500" y="357"/>
<rect x="1172" y="206" width="59" height="10" fill="#c88a08"/>
<text class="c" x="1149" y="214.500">211:</text><text class="c" x="1173" y="214.500" fill="#111">Custom...</text>
<text class="c" x="1189" y="242" text-anchor="middle">None</text>
<text class="c" x="1149" y="269.500">9:</text><rect x="1160" y="261" width="70" height="10" fill="#fcc40a"/>
<text class="c" x="1149" y="307.500">0:</text><rect x="1160" y="299" width="70" height="10" fill="#000"/>
<text class="c" x="1189" y="333.500" text-anchor="middle">None</text>
<text class="c" x="1149" y="360.500">15:</text>

<!-- bottom toolbar -->
<rect x="0" y="916" width="1280" height="28" fill="#e1e1e1"/>
<rect x="0" y="916" width="642" height="27" fill="#e3e3e3" stroke="#cfcfcf"/>
<rect x="0" y="944" width="1280" height="3" fill="#efefef"/>
<path d="M5 920V940" stroke="#c6c6c6" stroke-width="2"/>
<rect x="14.500" y="919.500" width="153" height="20" fill="#fff" stroke="#a9a9a9"/>
<rect x="150" y="920.500" width="16" height="18" fill="url(#btn)" stroke="#999"/><use href="#gchev" x="158" y="929"/>
<text x="19" y="935" font-family="'Liberation Serif',serif" font-size="12" fill="#999">T</text><text x="22" y="937" font-family="'Liberation Serif',serif" font-weight="bold" font-size="13" fill="#222">T</text>
<text x="39" y="934" font-size="13" fill="#222">Arial</text>
<rect x="174.500" y="919.500" width="54" height="20" fill="#fff" stroke="#a9a9a9"/>
<rect x="211" y="920.500" width="16" height="18" fill="url(#btn)" stroke="#999"/><use href="#gchev" x="219" y="929"/>
<text x="179" y="933" font-size="11" fill="#222">40</text>
<path d="M347 920V939M465 920V939M539 920V939M613 920V939" stroke="#cfcfcf"/>
<rect x="351" y="919" width="20" height="21" fill="#eef0f2" stroke="#d4d4d4"/>
<rect x="469" y="919" width="20" height="21" fill="#eef0f2" stroke="#d4d4d4"/>
<rect x="543" y="919" width="20" height="21" fill="#eef0f2" stroke="#d4d4d4"/>
<g font-family="'Liberation Serif',serif" font-weight="bold" fill="#203c80">
<text x="243" y="935" font-size="14">A</text><path d="M253 925l2-3 2 3Z"/>
<text x="266" y="935" font-size="12">A</text><path d="M275 925l2 3 2-3Z"/>
<text x="285" y="936" font-size="13" fill="#b02020">A</text>
<path d="M294 927l3-4 3 3-3 4Z" fill="#c8c8e8" stroke="#345" stroke-width=".6"/>
<rect x="314" y="926" width="13" height="11" fill="#f0c030" stroke="#906010"/><text x="316" y="936" font-size="12">A</text>
<path d="M326 926l3-4 3 3-3 4Z" fill="#c8c8e8" stroke="#345" stroke-width=".6"/>
<text x="356" y="935" font-size="13">B</text>
<text x="379" y="935" font-size="13" font-style="italic">I</text>
<text x="401" y="934" font-size="12" text-decoration="underline">U</text>
<text x="421" y="935" font-size="12">A</text><text x="429" y="929" font-size="8">2</text>
<text x="442" y="932" font-size="12">A</text><text x="451" y="937" font-size="8">2</text>
</g>
<use href="#garr" x="306" y="929.500"/><use href="#garr" x="336" y="929.500"/>
<g fill="#d4e4f6" stroke="#204a90">
<rect x="473.500" y="922.500" width="12" height="14"/><rect x="495.500" y="922.500" width="12" height="14"/><rect x="517.500" y="922.500" width="12" height="14"/>
<rect x="547.500" y="922.500" width="12" height="14"/><rect x="569.500" y="922.500" width="12" height="14"/><rect x="591.500" y="922.500" width="12" height="14"/>
</g>
<path d="M475.500 925h8M475.500 927.500h5M475.500 930h8M475.500 932.500h5M497.500 925h8M499 927.500h5M497.500 930h8M499 932.500h5M519.500 925h8M522.500 927.500h5M519.500 930h8M522.500 932.500h5M549.500 925h8M549.500 927.500h8M571.500 928.500h8M571.500 931h8M593.500 932h8M593.500 934h8" stroke="#204a90" stroke-width=".9"/>
<rect x="620.500" y="923.500" width="13" height="13" fill="#cfe6d4" stroke="#1c7a3a"/>
<text x="623" y="935" font-family="'Liberation Serif',serif" font-weight="bold" font-size="12" fill="#203c80">A</text>
<path d="M624 922l3-2 3 2M624 938l3 2 3-2" fill="none" stroke="#1a6a9a" stroke-width="1.500"/>
</svg>
</body></html>
